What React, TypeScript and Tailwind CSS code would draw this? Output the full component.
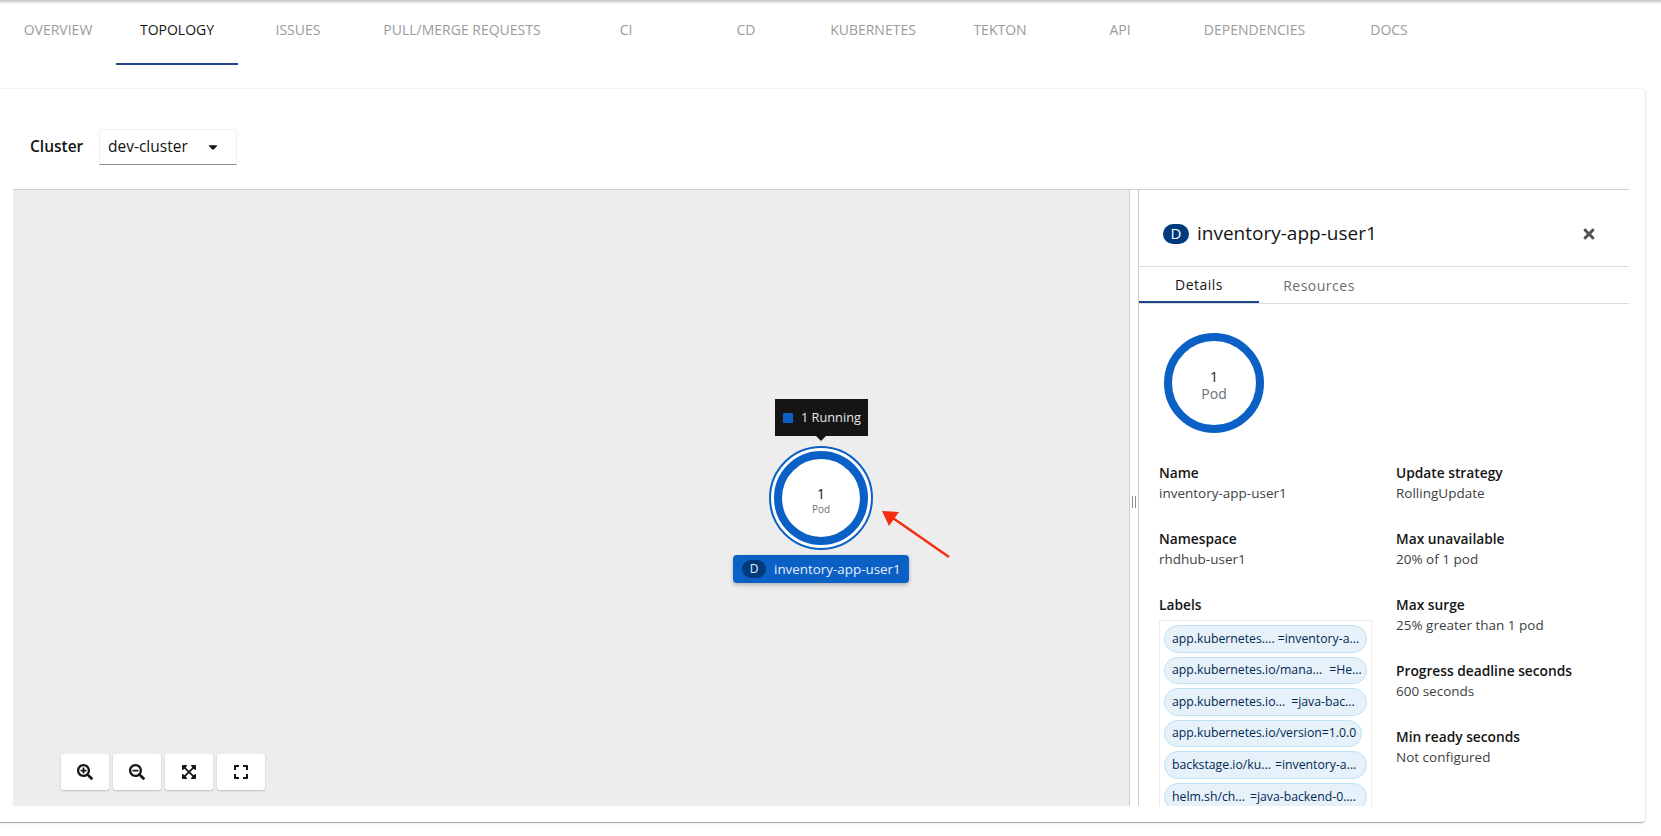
import { FaCaretDown, FaExpand, FaExpandArrowsAlt, FaSearchMinus, FaSearchPlus, FaTimes } from 'react-icons/fa';

const tabs = [
  { label: 'Overview', width: 'w-[116px]' },
  { label: 'Topology', width: 'w-[122px]', active: true },
  { label: 'Issues', width: 'w-[120px]' },
  { label: 'Pull/Merge Requests', width: 'w-[208px]' },
  { label: 'CI', width: 'w-[120px]' },
  { label: 'CD', width: 'w-[120px]' },
  { label: 'Kubernetes', width: 'w-[134px]' },
  { label: 'Tekton', width: 'w-[120px]' },
  { label: 'API', width: 'w-[120px]' },
  { label: 'Dependencies', width: 'w-[149px]' },
  { label: 'Docs', width: 'w-[120px]' },
];

const chips = [
  { left: 'app.kubernetes....', right: '=inventory-a...', height: 'h-[28px]', width: 'w-[203px]', gap: 'gap-[3px]' },
  { left: 'app.kubernetes.io/mana...', right: '=He...', height: 'h-[27px]', width: 'w-[203px]', gap: 'gap-[7px]' },
  { left: 'app.kubernetes.io...', right: '=java-bac...', height: 'h-[28px]', width: 'w-[203px]', gap: 'gap-[6px]' },
  { left: 'app.kubernetes.io/version=1.0.0', right: '', height: 'h-[27px]', width: 'w-[198px]', gap: 'gap-0' },
  { left: 'backstage.io/ku...', right: '=inventory-a...', height: 'h-[28px]', width: 'w-[203px]', gap: 'gap-[4px]' },
  { left: 'helm.sh/ch...', right: '=java-backend-0....', height: 'h-[28px]', width: 'w-[203px]', gap: 'gap-[5px]' },
];

const rightFields = [
  { name: 'Update strategy', value: 'RollingUpdate' },
  { name: 'Max unavailable', value: '20% of 1 pod' },
  { name: 'Max surge', value: '25% greater than 1 pod' },
  { name: 'Progress deadline seconds', value: '600 seconds' },
  { name: 'Min ready seconds', value: 'Not configured' },
];

function Field({ name, value }: { name: string; value: string }) {
  return (
    <div className="h-[66px]">
      <div className="text-[13.75px] leading-[21px] font-semibold text-[#151515]">{name}</div>
      <div className="text-[13.5px] leading-[21px] text-[#3c3f42]">{value}</div>
    </div>
  );
}

function ControlButton({ children }: { children: React.ReactNode }) {
  return (
    <button className="w-[48px] h-[36px] bg-white rounded-[3px] shadow-[0_1px_2px_rgba(0,0,0,0.2)] flex items-center justify-center text-[#151515] text-[16px]">
      {children}
    </button>
  );
}

export default function App() {
  return (
    <div className="w-full h-[836px] bg-white overflow-hidden flex flex-col font-['Open_Sans',sans-serif]">
      {/* Tabs */}
      <div className="h-[88px] shrink-0">
        <div className="h-[4px] bg-gradient-to-b from-[#c4c4c4] to-white" />
        <div className="flex h-[61px]">
          {tabs.map((tab) => (
            <div
              key={tab.label}
              className={`${tab.width} h-[61px] flex justify-center pt-[16px] border-b-2 uppercase text-[14px] leading-[20px] whitespace-nowrap ${
                tab.active ? 'border-[#1f4788] text-[#151515] font-medium' : 'border-transparent text-[#9b9b9b]'
              }`}
            >
              {tab.label}
            </div>
          ))}
        </div>
      </div>

      {/* Card */}
      <div className="h-[735px] mr-[15px] pl-[13px] pr-[16px] rounded-r-[5px] border-t border-[#f2f2f2] border-r border-r-[#ececec] border-b border-b-[#b0b0b0] shadow-[0_1px_2px_rgba(0,0,0,0.08)] flex flex-col shrink-0">
        <div className="h-[100px] shrink-0 flex items-start pt-[39px] pl-[17px]">
          <span className="text-[15.5px] leading-[36px] font-semibold text-[#151515] w-[69px]">Cluster</span>
          <div className="mt-[1px] w-[138px] h-[36px] border border-[#f0f0f0] border-b-[#8a8d90] flex items-center justify-between pl-[8px] pr-[16px] pb-[1px] text-[15.5px] text-[#151515]">
            dev-cluster
            <FaCaretDown size={14} />
          </div>
        </div>

        <div className="h-[617px] shrink-0 flex border-t border-[#cfcfcf] overflow-hidden">
          {/* Canvas */}
          <div className="relative w-[1116px] shrink-0 bg-[#ededed]">
            <div className="absolute left-[762px] top-[209px] w-[93px] h-[37px] bg-[#151515] flex items-center pl-[8px] gap-[8px] text-[12.75px] text-[#e8e8e8]">
              <span className="w-[10px] h-[10px] bg-[#0a60c5]" />
              1 Running
            </div>
            <div className="absolute left-[803px] top-[246px] w-0 h-0 border-x-[5px] border-x-transparent border-t-[5px] border-t-[#151515]" />

            <div className="absolute left-[756px] top-[256px] w-[104px] h-[104px] rounded-full border-2 border-[#0a60c5] bg-white p-[3px]">
              <div className="w-full h-full rounded-full border-[8px] border-[#0a60c5] flex flex-col items-center justify-center text-center pt-[5px]">
                <span className="text-[14px] leading-[16px] text-[#151515]">1</span>
                <span className="text-[10px] leading-[14px] text-[#6a6e73]">Pod</span>
              </div>
            </div>

            <div className="absolute left-[720px] top-[365px] w-[176px] h-[28px] rounded-[4px] bg-[#0a60c5] shadow-[0_2px_4px_rgba(0,0,0,0.25)] flex items-center pl-[9px] gap-[8px] text-[13.4px] text-[#e6eefa] whitespace-nowrap">
              <span className="w-[24px] h-[18px] rounded-full bg-[#003a7a] text-[12px] flex items-center justify-center">D</span>
              <span className="pt-[1px]">inventory-app-user1</span>
            </div>

            <svg className="absolute left-[860px] top-[310px]" width="90" height="60" viewBox="0 0 90 60">
              <line x1="76" y1="57" x2="17" y2="16" stroke="#f62d10" strokeWidth="2.5" />
              <polygon points="9,11 26,12 16,26" fill="#f62d10" />
            </svg>

            <div className="absolute left-[48px] top-[564px] flex gap-[4px]">
              <ControlButton><FaSearchPlus /></ControlButton>
              <ControlButton><FaSearchMinus /></ControlButton>
              <ControlButton><FaExpandArrowsAlt /></ControlButton>
              <ControlButton><FaExpand /></ControlButton>
            </div>
          </div>

          {/* Resize handle */}
          <div className="w-[10px] shrink-0 border-l border-[#cfcfcf] border-r border-r-[#cfcfcf] flex items-center justify-center pt-[8px] gap-[2px] bg-white">
            <span className="w-px h-[12px] bg-[#8a8d90]" />
            <span className="w-px h-[12px] bg-[#8a8d90]" />
          </div>

          {/* Side panel */}
          <div className="flex-1 min-w-0 overflow-hidden">
            <div className="h-[77px] border-b border-[#dcdcdc] flex items-center pl-[24px] pr-[32px] pt-[11px]">
              <span className="w-[26px] h-[20px] rounded-full bg-[#003a7a] text-white text-[15px] flex items-center justify-center">D</span>
              <span className="ml-[8px] text-[19px] text-[#151515]">inventory-app-user1</span>
              <FaTimes size={16} className="ml-auto text-[#4f5255]" />
            </div>

            <div className="flex h-[37px] border-b border-[#dcdcdc] text-[14px] tracking-[0.5px]">
              <div className="w-[120px] h-[36px] flex items-center justify-center border-b-2 border-[#1f4788] text-[#151515]">Details</div>
              <div className="w-[120px] h-[36px] flex items-center justify-center text-[#6a6e73]">Resources</div>
            </div>

            <div className="pl-[20px] pt-[29px]">
              <div className="ml-[5px] w-[100px] h-[100px] rounded-full border-[8px] border-[#0a60c5] flex flex-col items-center justify-center pt-[5px]">
                <span className="text-[14px] leading-[16px] text-[#151515]">1</span>
                <span className="text-[14px] leading-[17px] text-[#6a6e73]">Pod</span>
              </div>

              <div className="flex mt-[29px]">
                <div className="w-[237px] shrink-0">
                  <Field name="Name" value="inventory-app-user1" />
                  <Field name="Namespace" value="rhdhub-user1" />
                  <div className="text-[13.75px] leading-[21px] font-semibold text-[#151515]">Labels</div>
                  <div className="mt-[5px] w-[213px] border border-[#ececec] p-[4px] flex flex-col items-start gap-[4px]">
                    {chips.map((chip) => (
                      <div
                        key={chip.left}
                        className={`${chip.height} ${chip.width} ${chip.gap} shrink-0 rounded-full bg-[#e7f1fa] border border-[#bee1f4] flex items-center px-[7px] text-[12.25px] text-[#002952] whitespace-nowrap overflow-hidden`}
                      >
                        <span>{chip.left}</span>
                        {chip.right && <span>{chip.right}</span>}
                      </div>
                    ))}
                  </div>
                </div>
                <div className="flex-1">
                  {rightFields.map((f) => (
                    <Field key={f.name} name={f.name} value={f.value} />
                  ))}
                </div>
              </div>
            </div>
          </div>
        </div>
      </div>
    </div>
  );
}
